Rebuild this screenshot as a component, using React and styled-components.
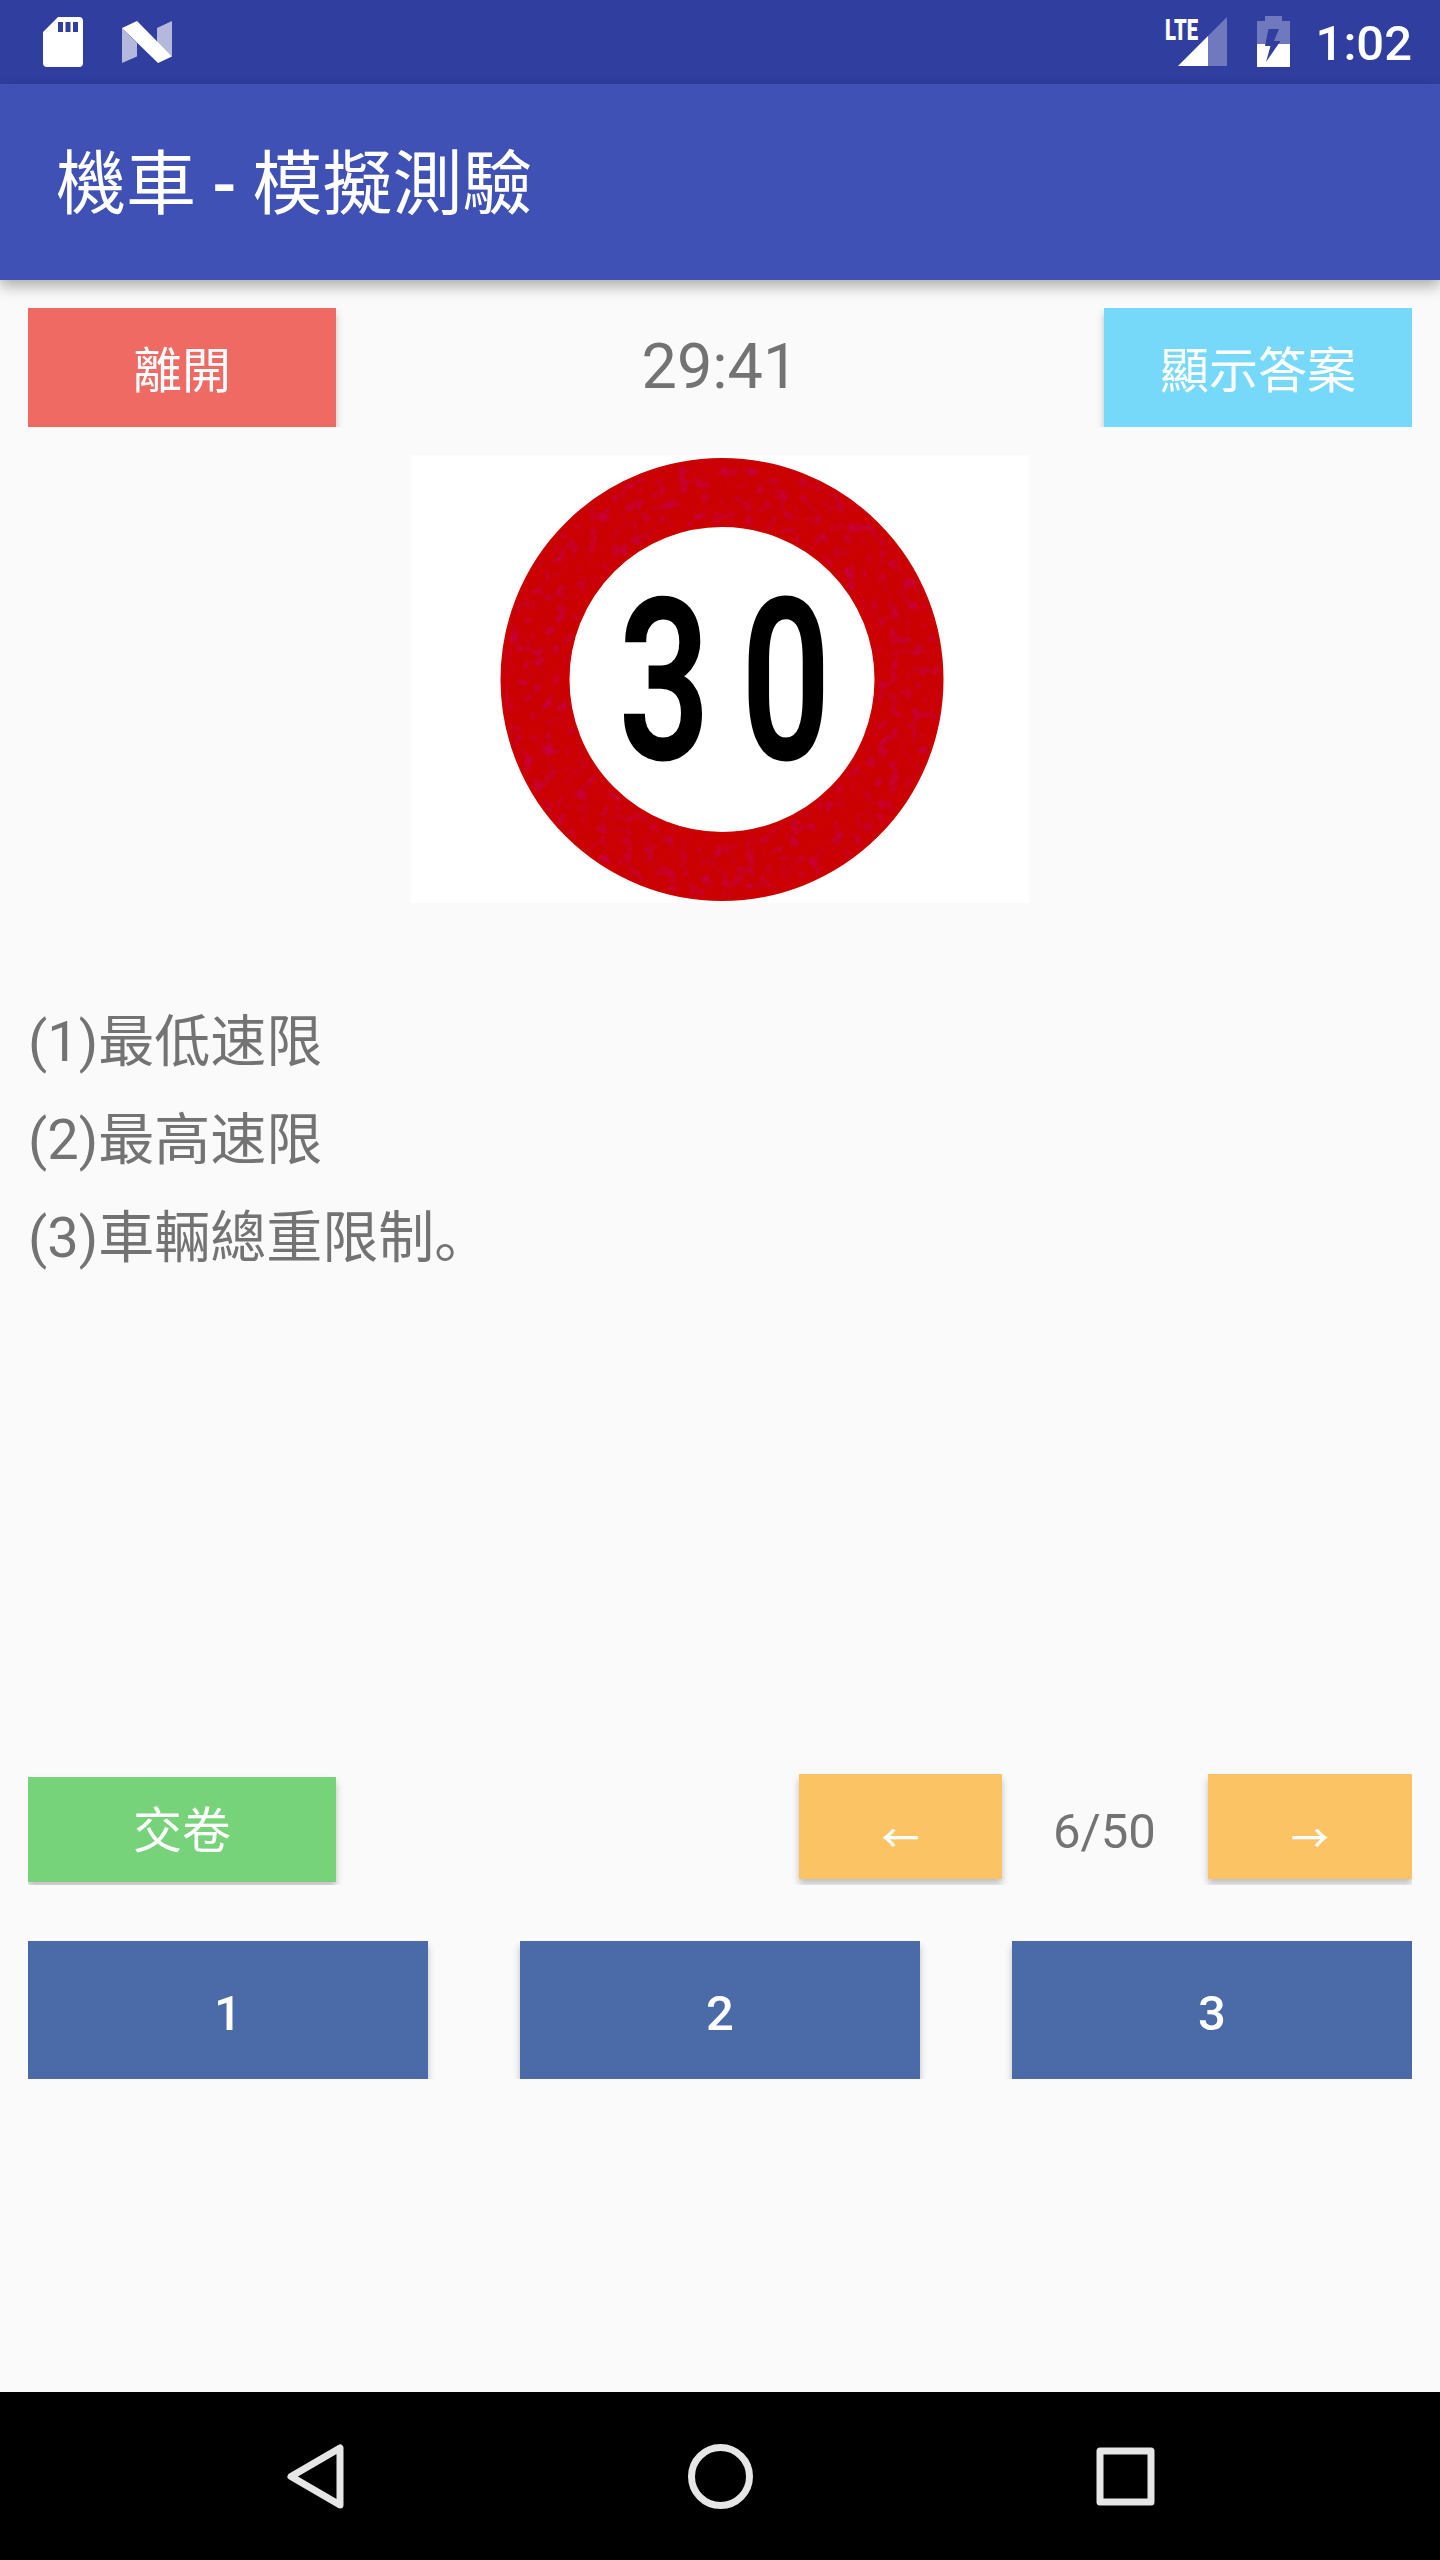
import React from "react";
import styled, { createGlobalStyle } from "styled-components";

const Global = createGlobalStyle`
  *, *::before, *::after { box-sizing: border-box; }
  html, body { margin: 0; padding: 0; background: #fafafa; }
  svg { display: block; }
`;

const Screen = styled.div`
  width: 1440px;
  height: 2560px;
  display: flex;
  flex-direction: column;
  background: #fafafa;
  color: #737373;
  font-family: Roboto, "Noto Sans CJK SC", sans-serif;
  overflow: hidden;
`;

const StatusBar = styled.header`
  height: 84px;
  flex: none;
  display: flex;
  align-items: center;
  justify-content: space-between;
  padding: 0 28px 0 43px;
  background: #303f9f;
  color: #fff;
`;

const StatusGroup = styled.div`
  display: flex;
  align-items: center;
`;

const Clock = styled.span`
  margin-left: 26px;
  padding-top: 3px;
  font-size: 49px;
  line-height: 58px;
  font-weight: 500;
`;

const AppBar = styled.div`
  height: 196px;
  flex: none;
  display: flex;
  align-items: center;
  padding: 5px 56px 0;
  background: #3f51b5;
  color: #fff;
  font-size: 70px;
  line-height: 84px;
  box-shadow: 0 6px 14px rgba(0, 0, 0, 0.32);
  white-space: pre;
`;

const Hyphen = styled.span`
  font-weight: 500;
  margin: 0 -1px;
`;

const Content = styled.main`
  flex: 1;
  display: flex;
  flex-direction: column;
  padding: 28px 28px 0;
`;

const TopRow = styled.div`
  display: grid;
  grid-template-columns: 308px 1fr 308px;
  height: 119px;
  overflow: hidden;
`;

const Button = styled.button`
  display: flex;
  align-items: center;
  justify-content: center;
  width: ${(p) => p.$w}px;
  height: ${(p) => p.$h}px;
  margin: ${(p) => p.$mt || 0}px 0 0;
  padding: ${(p) => p.$pt || 0}px 0 0;
  border: 0;
  background: ${(p) => p.$bg};
  color: #fff;
  font: ${(p) => p.$weight || 400} 49px / 58px Roboto, "Noto Sans CJK SC", sans-serif;
  box-shadow: 0 5px 7px rgba(0, 0, 0, 0.24);
`;

const Timer = styled.div`
  display: flex;
  align-items: center;
  justify-content: center;
  padding: 0 0 2px 0;
  font-size: 63px;
  line-height: 74px;
`;

const Figure = styled.div`
  align-self: center;
  width: 618px;
  height: 448px;
  margin-top: 28px;
  background: #fff;
`;

const Choices = styled.ol`
  list-style: none;
  margin: 90px 0 0;
  padding: 0;
  height: 781px;
  font-size: 56px;
  line-height: 98px;
`;

const Choice = styled.li`
  height: 98px;
`;

const ControlRow = styled.div`
  display: flex;
  align-items: flex-start;
  justify-content: space-between;
  height: 111px;
  overflow: hidden;
`;

const Pager = styled.div`
  display: flex;
  width: 613px;
  justify-content: space-between;
`;

const Count = styled.span`
  padding: 29px 1px 0 0;
  font-size: 49px;
  line-height: 58px;
`;

const Arrow = styled.span`
  font-family: "Noto Sans CJK SC", sans-serif;
  font-size: 38px;
  font-weight: 500;
  line-height: 58px;
`;

const AnswerRow = styled.div`
  display: flex;
  justify-content: space-between;
  height: 138px;
  margin-top: 56px;
  overflow: hidden;
`;

const NavBar = styled.nav`
  height: 168px;
  flex: none;
  display: flex;
  justify-content: space-between;
  align-items: center;
  padding: 0 282px;
  background: #000;
`;

function SdCard() {
  return (
    <svg width="40" height="50" viewBox="0 0 40 50">
      <path fill="#fff" fillRule="evenodd" d="M15 0H36Q40 0 40 4V46Q40 50 36 50H4Q0 50 0 46V15ZM15 5V15H20V5ZM22.500 5V15H27.500V5ZM30 5V15H35V5Z" />
    </svg>
  );
}

const NougatMark = styled.svg`
  margin-left: 39px;
`;

function Nougat() {
  return (
    <NougatMark width="50" height="42" viewBox="0 0 50 42">
      <path fill="#b4b8dd" d="M0 7L15 22V35.500L0 42ZM35 7L50 0V35.500L35 22Z" />
      <path fill="#fff" d="M0 7L15 0L50 35.500L36 42Z" />
    </NougatMark>
  );
}

function Signal() {
  return (
    <svg width="68" height="64" viewBox="1160 10 68 64">
      <path fill="#7079bd" d="M1208 36L1227 17V66H1208Z" />
      <path fill="#fff" d="M1178 66L1208 36V66Z" />
      <text x="1165" y="39.5" fill="#fff" fontFamily="Roboto" fontWeight="900" fontSize="30" textLength="33" lengthAdjust="spacingAndGlyphs">LTE</text>
    </svg>
  );
}

const BatterySvg = styled.svg`
  margin-left: 29px;
`;

function Battery() {
  return (
    <BatterySvg width="33" height="52" viewBox="1257 16 33 52">
      <path fill="#7079bd" d="M1265 16H1282V21H1290V45H1257V21H1265Z" />
      <path fill="#fff" d="M1257 44H1290V67H1257Z" />
      <path fill="#303f9f" d="M1268.500 29H1279L1274 41H1280.500L1266 62L1270.500 46H1265Z" />
    </BatterySvg>
  );
}

function SpeedSign() {
  return (
    <svg width="618" height="448" viewBox="411 455 618 448">
      <defs>
        <filter id="mottle" x="-15%" y="-15%" width="130%" height="130%" colorInterpolationFilters="sRGB">
          <feTurbulence type="fractalNoise" baseFrequency="0.09" numOctaves="2" seed="4" />
          <feColorMatrix values="0 0 0 0 0.78  0 0 0 0 0  0 0 0 0 0.25  3 0 0 0 -1.500" />
          <feComposite in2="SourceGraphic" operator="in" />
        </filter>
      </defs>
      <circle cx="722" cy="679.5" r="187" fill="none" stroke="#cb0000" strokeWidth="69" />
      <circle cx="722" cy="679.5" r="187" fill="none" stroke="#cb0000" strokeWidth="60" filter="url(#mottle)" />
      <g fill="#000" stroke="#000" strokeWidth="3" fontFamily="Roboto" fontWeight="500" fontSize="222" textAnchor="middle">
        <text transform="translate(664.5 757.5) scale(0.72 1)">3</text>
        <text transform="translate(786 757.5) scale(0.7 1)">0</text>
      </g>
    </svg>
  );
}

function NavIcon({ children }) {
  return (
    <svg width="68" height="68" viewBox="0 0 68 68" fill="none" stroke="#e6e6e6" strokeWidth="7" strokeLinejoin="round">
      {children}
    </svg>
  );
}

const choices = ["(1)最低速限", "(2)最高速限", "(3)車輛總重限制。"];

export default function App() {
  return (
    <Screen>
      <Global />
      <StatusBar>
        <StatusGroup>
          <SdCard />
          <Nougat />
        </StatusGroup>
        <StatusGroup>
          <Signal />
          <Battery />
          <Clock>1:02</Clock>
        </StatusGroup>
      </StatusBar>
      <AppBar>機車 <Hyphen>-</Hyphen> 模擬測驗</AppBar>
      <Content>
        <TopRow>
          <Button $w={308} $h={119} $bg="#f06a64" $pt={8}>離開</Button>
          <Timer>29:41</Timer>
          <Button $w={308} $h={119} $bg="#76d9f9" $pt={8}>顯示答案</Button>
        </TopRow>
        <Figure><SpeedSign /></Figure>
        <Choices>
          {choices.map((c) => <Choice key={c}>{c}</Choice>)}
        </Choices>
        <ControlRow>
          <Button $w={308} $h={105} $mt={3} $pt={5} $bg="#77d379">交卷</Button>
          <Pager>
            <Button $w={203} $h={105} $bg="#fcc364" $pt={18}><Arrow>←</Arrow></Button>
            <Count>6/50</Count>
            <Button $w={204} $h={105} $bg="#fcc364" $pt={18}><Arrow>→</Arrow></Button>
          </Pager>
        </ControlRow>
        <AnswerRow>
          {[1, 2, 3].map((n) => (
            <Button key={n} $w={400} $h={138} $bg="#4a6aa8" $weight={500} $pt={7}>{n}</Button>
          ))}
        </AnswerRow>
      </Content>
      <NavBar>
        <NavIcon><path d="M58 6V63L9 34.500Z" /></NavIcon>
        <NavIcon><circle cx="34.5" cy="34.5" r="29" /></NavIcon>
        <NavIcon><rect x="10" y="9" width="51" height="51" /></NavIcon>
      </NavBar>
    </Screen>
  );
}
